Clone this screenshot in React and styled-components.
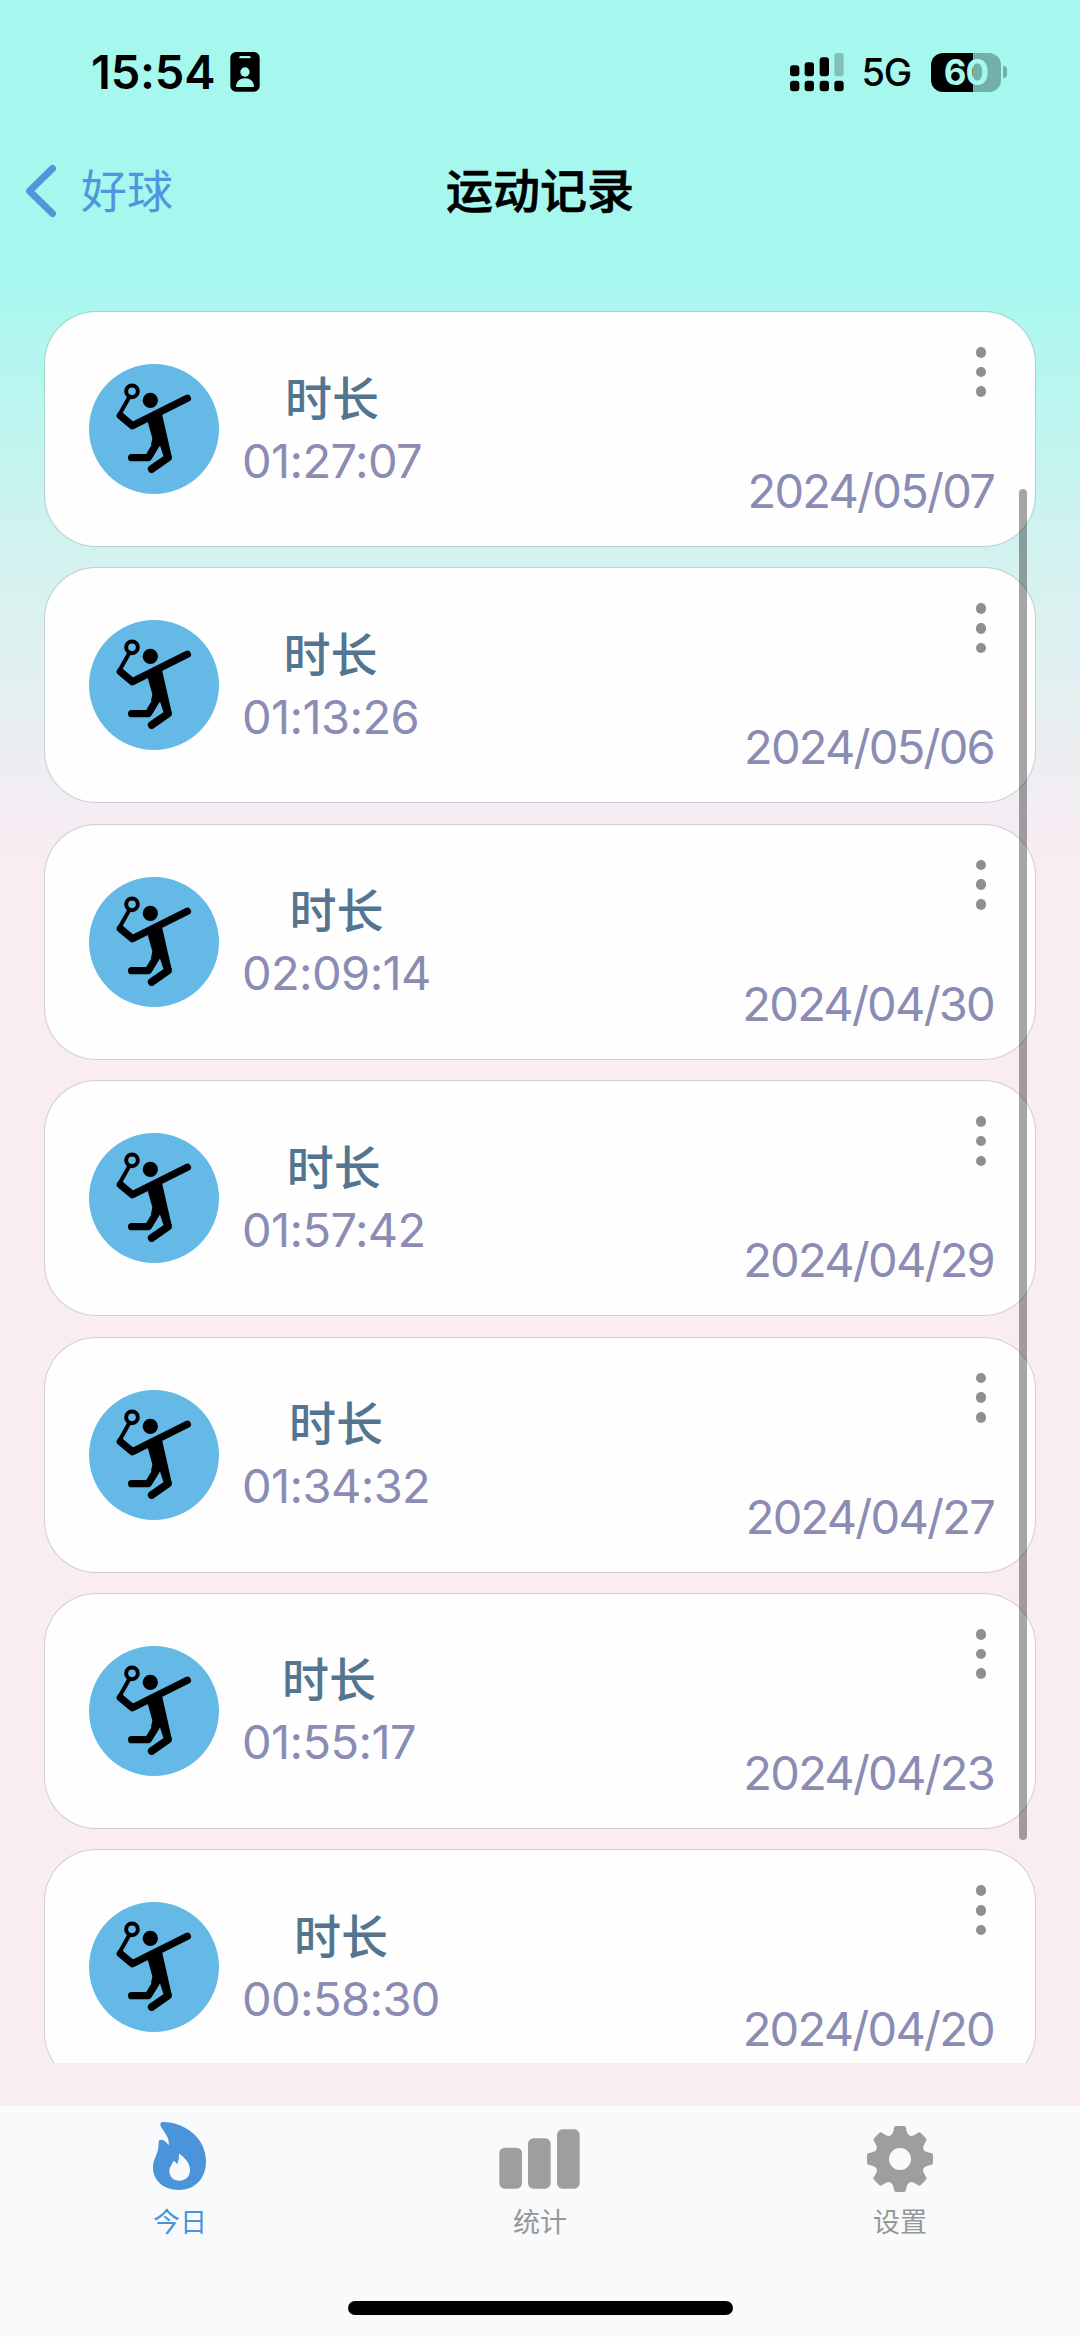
import React from 'react'
import styled, { createGlobalStyle } from 'styled-components'

const GlobalStyle = createGlobalStyle`
  * {
    box-sizing: border-box;
  }
  body {
    margin: 0;
    font-family: Inter, "Noto Sans CJK SC", sans-serif;
  }
`;

const Screen = styled.div`
  position: relative;
  width: 1080px;
  height: 2337px;
  display: flex;
  flex-direction: column;
  overflow: hidden;
  background: linear-gradient(180deg, #a6f8ef 0, #a6f8ef 270px, #d4f2ef 560px, #f9ecf3 860px, #f9ecf3 100%);
`;

const StatusBar = styled.header`
  height: 144px;
  padding: 0 73px 0 91px;
  display: flex;
  align-items: center;
  justify-content: space-between;
`;
const StatusGroup = styled.div`
  display: flex;
  align-items: center;
`;
const Clock = styled.span`
  font-size: 47px;
  font-weight: 600;
  line-height: 56px;
  letter-spacing: -0.2px;
  margin-right: 15px;
`;
const Network = styled.span`
  font-size: 38px;
  font-weight: 500;
  line-height: 46px;
  letter-spacing: -1.2px;
  margin: 0 20px 0 18px;
`;
const Battery = styled.div`
  width: 70px;
  height: 39px;
  border-radius: 12px;
  background: linear-gradient(90deg, #000 0 42px, #73b0ab 42px);
  color: #a6f8ef;
  font-size: 35px;
  font-weight: 700;
  line-height: 39px;
  text-align: center;
  letter-spacing: -1px;
`;
const BatteryTip = styled.div`
  width: 4px;
  height: 12px;
  margin-left: 2px;
  border-radius: 0 4px 4px 0;
  background: #73b0ab;
`;

const NavBar = styled.nav`
  height: 94px;
  padding: 0 24px;
  display: grid;
  grid-template-columns: 1fr auto 1fr;
  align-items: center;
`;
const Back = styled.a`
  display: flex;
  align-items: center;
  gap: 23px;
  color: #4f97dc;
  font-size: 46px;
  line-height: 60px;
`;
const Title = styled.h1`
  margin: 0;
  font-size: 47px;
  font-weight: 500;
  line-height: 60px;
  -webkit-text-stroke: 0.7px #000;
`;

const List = styled.main`
  height: 1752px;
  margin-top: 73px;
  padding: 0 44px;
  overflow: hidden;
  display: flex;
  flex-direction: column;
  gap: 20.4px;
`;
const Card = styled.article`
  flex: none;
  height: 236px;
  padding: 0 41px 0 44px;
  display: flex;
  align-items: center;
  background: #fefefe;
  border: 1px solid rgba(120, 130, 130, 0.28);
  background-clip: padding-box;
  border-radius: 52px;
`;
const Info = styled.div`
  margin-left: 23px;
  padding-top: 1px;
  display: flex;
  flex-direction: column;
  align-items: center;
`;
const Label = styled.span`
  color: #53758f;
  font-size: 47px;
  font-weight: 500;
  line-height: 62px;
`;
const Duration = styled.span`
  color: #8b8cb4;
  font-size: 47px;
  line-height: 62px;
  letter-spacing: -0.6px;
`;
const Side = styled.div`
  flex: 1;
  height: 100%;
  padding: 35px 0 24px;
  display: flex;
  flex-direction: column;
  align-items: flex-end;
  justify-content: space-between;
`;
const MoreButton = styled.button`
  width: 26px;
  height: 50px;
  padding: 0;
  border: none;
  background: none;
  display: flex;
  flex-direction: column;
  align-items: center;
  justify-content: space-between;
`;
const Dot = styled.i`
  width: 10.6px;
  height: 10.6px;
  border-radius: 50%;
  background: #8f8f8f;
`;
const Day = styled.time`
  color: #8b8cb4;
  font-size: 47px;
  line-height: 62px;
  letter-spacing: -1.75px;
`;

const ScrollThumb = styled.div`
  position: absolute;
  top: 489px;
  left: 1019px;
  width: 8px;
  height: 1351px;
  border-radius: 4px;
  background: rgba(0, 0, 0, 0.35);
`;

const TabBar = styled.footer`
  height: 231px;
  margin-top: auto;
  background: #f8fafb;
  display: flex;
  flex-direction: column;
  align-items: center;
  justify-content: space-between;
  padding: 15px 0 22px;
`;
const Tabs = styled.div`
  width: 100%;
  display: grid;
  grid-template-columns: repeat(3, 1fr);
`;
const Tab = styled.a`
  display: flex;
  flex-direction: column;
  align-items: center;
  color: ${({ $active }) => ($active ? '#4b94dc' : '#969898')};
  font-size: 27px;
  line-height: 36px;
  gap: 12px;

  svg {
    color: ${({ $active }) => ($active ? '#4b94dc' : '#9d9f9f')};
  }
`;
const HomeIndicator = styled.div`
  width: 385px;
  height: 14px;
  border-radius: 7px;
  background: #000;
`;

const BadgeIcon = () => (
  <svg width="30" height="40" viewBox="0 0 90 120">
    <rect x="1" y="0" width="88" height="119" rx="17" />
    <rect x="28" y="12" width="34" height="7" rx="3.5" fill="#a6f8ef" />
    <circle cx="45" cy="60" r="14" fill="#a6f8ef" />
    <path d="M18 105 C18 88 30 79 45 79 C60 79 72 88 72 105 Z" fill="#a6f8ef" />
  </svg>
)

const SignalIcon = () => (
  <svg width="54" height="39" viewBox="0 0 162 117">
    <rect x="0" y="37" width="28" height="33" rx="9" />
    <rect x="44" y="28" width="28" height="42" rx="9" />
    <rect x="89" y="13" width="28" height="57" rx="9" />
    <rect x="133" y="0" width="28" height="70" rx="9" opacity="0.22" />
    <rect x="0" y="83" width="28" height="32" rx="9" />
    <rect x="44" y="83" width="28" height="32" rx="9" />
    <rect x="89" y="83" width="28" height="32" rx="9" />
    <rect x="133" y="83" width="28" height="32" rx="9" />
  </svg>
)

const BackIcon = () => (
  <svg width="34" height="54" viewBox="0 0 34 54">
    <path d="M28.5 4.5 L5.5 27 L28.5 49.5" fill="none" stroke="currentColor" strokeWidth="7" strokeLinecap="round" strokeLinejoin="round" />
  </svg>
)

const BadmintonIcon = () => (
  <svg width="130" height="130" viewBox="26 27 390 390">
    <circle cx="221" cy="222" r="195" fill="#64b9e7" />
    <g fill="none" stroke="#000" strokeLinejoin="round" strokeLinecap="round">
      <circle cx="155" cy="109" r="17.5" strokeWidth="12" />
      <path d="M147 126 L117 179" strokeWidth="12" />
      <path d="M120 182 L156 212 L321 130" strokeWidth="22" />
      <path d="M234 258 L204 308 L154 308" strokeWidth="22" />
      <path d="M244 250 L263 308 L214 342" strokeWidth="23" />
    </g>
    <circle cx="210" cy="136" r="23" />
    <path d="M202 200 L245 176 L275 308 L240 270 L212 270 L216 250 Z" />
  </svg>
)

const FlameIcon = () => (
  <svg width="84" height="72" viewBox="84 93 252 216" fill="currentColor">
    <path
      fillRule="evenodd"
      d="M158 96 C215 94 288 138 288 214 C288 268 253 300 207 300 C160 300 129 271 129 232 C129 203 147 194 146 156 Q146 148 154 149 Q167 151 176 166 C180 145 164 129 153 110 Q147 98 158 96 Z
      M207 191 C226 203 240 221 240 239 C240 260 226 272 208 272 C190 272 178 260 178 242 C178 230 187 225 190 212 Q197 215 202 223 Q208 209 207 191 Z"
    />
  </svg>
)

const ChartIcon = () => (
  <svg width="84" height="72" viewBox="84 93 252 216" fill="currentColor">
    <rect x="88" y="173" width="68" height="123" rx="16" />
    <rect x="174" y="145" width="68" height="151" rx="16" />
    <rect x="261" y="118" width="68" height="178" rx="16" />
  </svg>
)

const teeth = [0, 45, 90, 135, 180, 225, 270, 315]

const GearIcon = () => (
  <svg width="84" height="72" viewBox="84 93 252 216" fill="currentColor">
    <circle cx="210" cy="207" r="54" fill="none" stroke="currentColor" strokeWidth="42" />
    {teeth.map((angle) => (
      <path
        key={angle}
        transform={`rotate(${angle} 210 207)`}
        d="M179 139 Q188 134 190 124 L193 112 Q194 108 199 108 L221 108 Q226 108 227 112 L230 124 Q232 134 241 139 Z"
      />
    ))}
  </svg>
)

const records = [
  { duration: '01:27:07', date: '2024/05/07' },
  { duration: '01:13:26', date: '2024/05/06' },
  { duration: '02:09:14', date: '2024/04/30' },
  { duration: '01:57:42', date: '2024/04/29' },
  { duration: '01:34:32', date: '2024/04/27' },
  { duration: '01:55:17', date: '2024/04/23' },
  { duration: '00:58:30', date: '2024/04/20' },
]

const Record = ({ duration, date }) => (
  <Card>
    <BadmintonIcon />
    <Info>
      <Label>时长</Label>
      <Duration>{duration}</Duration>
    </Info>
    <Side>
      <MoreButton>
        <Dot />
        <Dot />
        <Dot />
      </MoreButton>
      <Day>{date}</Day>
    </Side>
  </Card>
)

const App = () => {
  return (
    <>
      <GlobalStyle />
      <Screen>
        <StatusBar>
          <StatusGroup>
            <Clock>15:54</Clock>
            <BadgeIcon />
          </StatusGroup>
          <StatusGroup>
            <SignalIcon />
            <Network>5G</Network>
            <Battery>60</Battery>
            <BatteryTip />
          </StatusGroup>
        </StatusBar>
        <NavBar>
          <Back>
            <BackIcon />
            好球
          </Back>
          <Title>运动记录</Title>
        </NavBar>
        <List>
          {records.map((record) => (
            <Record key={record.date} {...record} />
          ))}
        </List>
        <ScrollThumb />
        <TabBar>
          <Tabs>
            <Tab $active>
              <FlameIcon />
              今日
            </Tab>
            <Tab>
              <ChartIcon />
              统计
            </Tab>
            <Tab>
              <GearIcon />
              设置
            </Tab>
          </Tabs>
          <HomeIndicator />
        </TabBar>
      </Screen>
    </>
  )
}

export default App
